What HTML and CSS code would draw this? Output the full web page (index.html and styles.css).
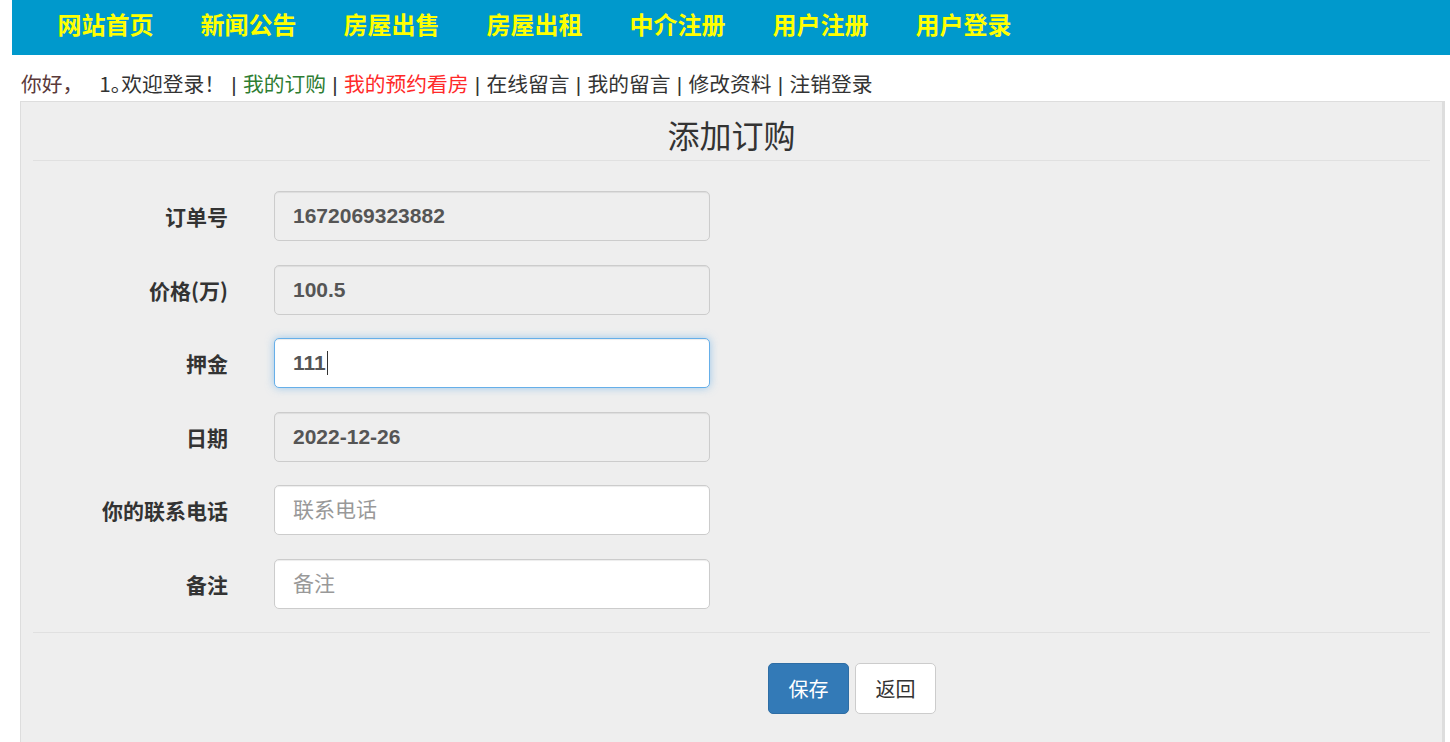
FILE: index.html
```html
<!DOCTYPE html>
<html lang="zh-CN">
<head>
<meta charset="utf-8">
<title>添加订购</title>
<link rel="stylesheet" href="styles.css">
</head>
<body>
<nav class="topnav">
  <a class="nav-link" href="#">网站首页</a>
  <a class="nav-link" href="#">新闻公告</a>
  <a class="nav-link" href="#">房屋出售</a>
  <a class="nav-link" href="#">房屋出租</a>
  <a class="nav-link" href="#">中介注册</a>
  <a class="nav-link" href="#">用户注册</a>
  <a class="nav-link" href="#">用户登录</a>
</nav>
<div class="welcome"><span class="hello">你好，</span><span class="user">1<span class="half">。</span>欢迎登录！</span><span class="sep">|</span><a class="wl green" href="#">我的订购</a><span class="sep">|</span><a class="wl red" href="#">我的预约看房</a><span class="sep">|</span><a class="wl" href="#">在线留言</a><span class="sep">|</span><a class="wl" href="#">我的留言</a><span class="sep">|</span><a class="wl" href="#">修改资料</a><span class="sep">|</span><a class="wl" href="#">注销登录</a></div>
<div class="panel">
  <h2 class="panel-title">添加订购</h2>
  <form class="form">
    <div class="row">
      <label class="label">订单号</label>
      <input class="field readonly" type="text" value="1672069323882" readonly>
    </div>
    <div class="row">
      <label class="label">价格(万)</label>
      <input class="field readonly" type="text" value="100.5" readonly>
    </div>
    <div class="row">
      <label class="label">押金</label>
      <div class="field focus"><span class="val">111</span><span class="caret"></span></div>
    </div>
    <div class="row">
      <label class="label">日期</label>
      <input class="field readonly" type="text" value="2022-12-26" readonly>
    </div>
    <div class="row">
      <label class="label">你的联系电话</label>
      <input class="field" type="text" placeholder="联系电话">
    </div>
    <div class="row">
      <label class="label">备注</label>
      <input class="field" type="text" placeholder="备注">
    </div>
  </form>
  <div class="actions">
    <button class="btn btn-primary" type="button">保存</button>
    <button class="btn btn-default" type="button">返回</button>
  </div>
</div>
</body>
</html>
```
FILE: styles.css
```css
html, body {
  margin: 0;
  padding: 0;
  background: #fff;
  overflow: hidden;
}
body {
  font-family: "Noto Sans CJK SC", "Liberation Serif", serif;
  color: #333;
}
.topnav {
  margin-left: 12px;
  height: 55px;
  background: #0099cc;
  display: flex;
  align-items: center;
  padding-left: 22px;
  padding-bottom: 8px;
  box-sizing: border-box;
}
.nav-link {
  color: #ffff00;
  font-weight: bold;
  font-size: 24px;
  line-height: 30px;
  text-decoration: none;
  padding: 0 23.5px;
}
.welcome {
  padding: 14px 0 0 21px;
  height: 32px;
  line-height: 29px;
  font-size: 20.75px;
  color: #333;
  white-space: nowrap;
}
.hello { color: #5a3a3a; }
.user { margin-left: 16px; }
.half { font-feature-settings: "halt"; }
.sep {
  display: inline-block;
  width: 18px;
  text-align: center;
  font-family: "Liberation Sans", sans-serif;
  color: #333;
}
.wl { color: #333; text-decoration: none; }
.wl.green { color: #2e7d32; }
.wl.red { color: #ff2a2a; }
.panel {
  margin: 0 5px 0 20px;
  height: 700px;
  background: #eeeeee;
  border: 1px solid #dddddd;
  border-right-width: 3px;
  padding: 0 12px;
}
.panel-title {
  margin: 0;
  padding: 14px 0 8px;
  height: 36px;
  line-height: 36px;
  text-align: center;
  font-size: 32px;
  font-weight: normal;
  color: #333;
  border-bottom: 1px solid #e0e0e0;
}
.form {
  padding: 30px 0 23px;
  display: flex;
  flex-direction: column;
  gap: 23.5px;
  border-bottom: 1px solid #e0e0e0;
}
.row {
  display: flex;
  align-items: center;
  gap: 46px;
}
.label {
  width: 195px;
  text-align: right;
  font-weight: bold;
  font-size: 21px;
  color: #333;
}
.field {
  width: 436px;
  height: 50px;
  box-sizing: border-box;
  border: 1px solid #cccccc;
  border-radius: 5px;
  background: #fff;
  padding: 0 18px;
  font-family: "Liberation Sans", Arial, sans-serif;
  font-weight: bold;
  font-size: 21px;
  color: #555;
  box-shadow: inset 0 1px 1px rgba(0,0,0,.075);
  outline: none;
}
div.field {
  display: flex;
  align-items: center;
}
.caret {
  display: inline-block;
  width: 1px;
  height: 24px;
  background: #333;
  margin-left: 1px;
}
.field::placeholder {
  font-family: "Noto Sans CJK SC", sans-serif;
  font-weight: normal;
  font-size: 21px;
  color: #999;
}
.field.readonly {
  background: #eeeeee;
}
.field.focus {
  border-color: #66afe9;
  box-shadow: inset 0 1px 1px rgba(0,0,0,.075), 0 0 8px rgba(102,175,233,.6);
}
.actions {
  padding: 30px 0 0 735px;
  display: flex;
  gap: 6px;
}
.btn {
  width: 81px;
  height: 51px;
  border-radius: 5px;
  font-family: "Noto Sans CJK SC", sans-serif;
  font-size: 20px;
  cursor: pointer;
  padding: 0;
}
.btn-primary {
  background: #337ab7;
  border: 1px solid #2e6da4;
  color: #fff;
}
.btn-default {
  background: #fff;
  border: 1px solid #cccccc;
  color: #333;
}
```
